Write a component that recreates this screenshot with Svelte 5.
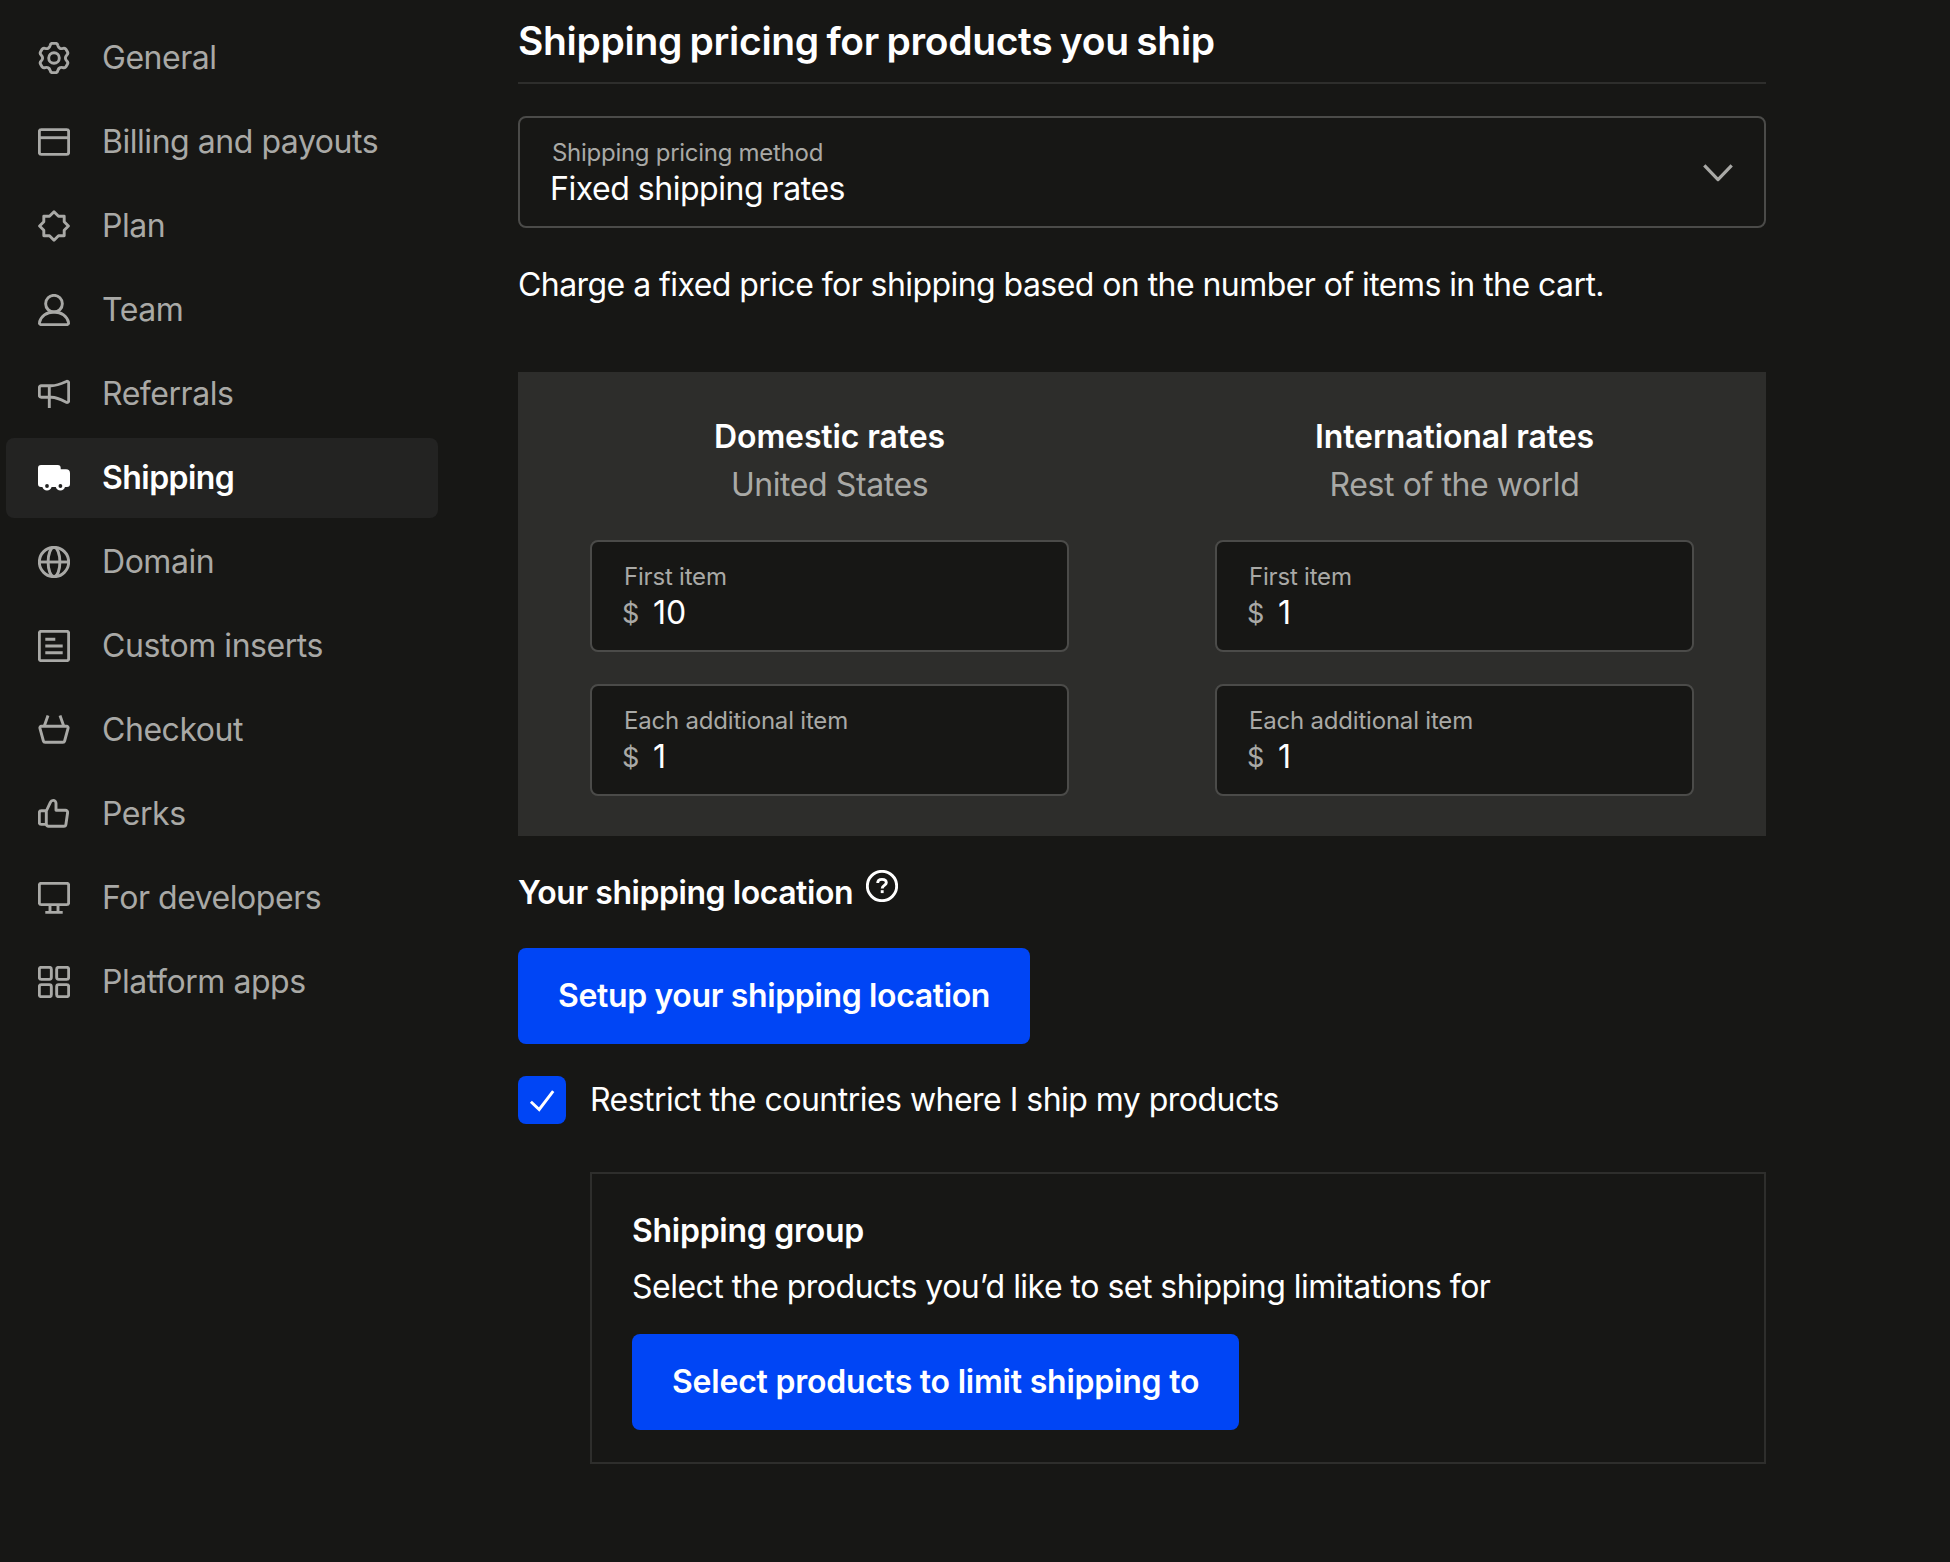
<script lang="ts">
  type NavItem = { id: string; label: string };

  const navItems: NavItem[] = [
    { id: "general", label: "General" },
    { id: "billing", label: "Billing and payouts" },
    { id: "plan", label: "Plan" },
    { id: "team", label: "Team" },
    { id: "referrals", label: "Referrals" },
    { id: "shipping", label: "Shipping" },
    { id: "domain", label: "Domain" },
    { id: "inserts", label: "Custom inserts" },
    { id: "checkout", label: "Checkout" },
    { id: "perks", label: "Perks" },
    { id: "developers", label: "For developers" },
    { id: "apps", label: "Platform apps" },
  ];

  let active = $state("shipping");
  let restrict = $state(true);

  let rates = $state([
    { title: "Domestic rates", region: "United States", first: "10", additional: "1" },
    { title: "International rates", region: "Rest of the world", first: "1", additional: "1" },
  ]);

  // One cog tooth, repeated every 60 degrees around the centre
  function gearPath(): string {
    const tooth = [
      [-4.4, -10.6], [-3.9, -12.4],
      [-3.4, -14.7], [-1.6, -14.7],
      [1.6, -14.7], [1.6, -14.7],
      [3.4, -14.7], [3.9, -12.4],
      [4.4, -10.6], [5.7, -9.87],
    ];
    let d = "M10.3 6.13";
    for (let k = 0; k < 6; k++) {
      const a = (k * Math.PI) / 3;
      const pts = tooth.map(([x, y]) => {
        const px = 16 + x * Math.cos(a) - y * Math.sin(a);
        const py = 16 + x * Math.sin(a) + y * Math.cos(a);
        return `${px.toFixed(2)} ${py.toFixed(2)}`;
      });
      for (let i = 0; i < pts.length; i += 2) d += `Q${pts[i]} ${pts[i + 1]}`;
    }
    return d + "Z";
  }
</script>

{#snippet icon(id: string)}
  <svg class="icon" viewBox="0 0 32 32" aria-hidden="true">
    {#if id === "general"}
      <path d={gearPath()} />
      <circle cx="16" cy="16" r="5.3" />
    {:else if id === "billing"}
      <rect x="1.33" y="3.67" width="29.33" height="24.67" rx="2" />
      <path d="M1.33 11.7h29.33" />
    {:else if id === "plan"}
      <path d="M16 1.8l4.5 4.4h5.7v5.6l4.2 4.2-4.2 4.2v5.6h-5.7L16 30.2l-4.5-4.4H5.8v-5.6L1.6 16l4.2-4.2V6.2h5.7z" />
    {:else if id === "team"}
      <circle cx="16" cy="9.7" r="8.35" />
      <path d="M16 18C8.5 18 2.8 22.4 1.5 28.4a1.7 1.7 0 0 0 1.7 2.2h25.6a1.7 1.7 0 0 0 1.7-2.2C29.2 22.4 23.5 18 16 18z" />
    {:else if id === "referrals"}
      <path d="M3.3 7.7h10C19 7.7 23.5 5.6 28.2 3.5a1.7 1.7 0 0 1 2.5 1.5v17.8a1.7 1.7 0 0 1-2.5 1.5C23.5 21.8 19 19.3 13.3 19.3h-10a2 2 0 0 1-2-2V9.7a2 2 0 0 1 2-2z" />
      <path d="M11.3 7.7V30" />
    {:else if id === "shipping"}
      <path
        class="solid"
        d="M3 3h16.7a3 3 0 0 1 3 3v1.3H28a4 4 0 0 1 4 4V22a3 3 0 0 1-3 3h-2a4.8 4.8 0 0 1-9.2 0h-4.2a4.8 4.8 0 0 1-9.2 0H3a3 3 0 0 1-3-3V6a3 3 0 0 1 3-3z"
      />
      <circle class="hole" cx="9" cy="24" r="1.9" />
      <circle class="hole" cx="22.4" cy="24" r="1.9" />
    {:else if id === "domain"}
      <circle cx="16" cy="16" r="14.67" />
      <ellipse cx="16" cy="16" rx="5.9" ry="14.67" />
      <path d="M1.33 16h29.33" />
    {:else if id === "inserts"}
      <rect x="1.33" y="1.33" width="29.33" height="29.33" rx="2" />
      <path d="M7.3 9.3h10M7.3 16h17.4M7.3 22.7h17.4" />
    {:else if id === "checkout"}
      <path d="M3.4 12.3h25.2a1.5 1.5 0 0 1 1.5 1.9l-3.5 12.8a1.8 1.8 0 0 1-1.7 1.3H7.1a1.8 1.8 0 0 1-1.7-1.3L1.9 14.2a1.5 1.5 0 0 1 1.5-1.9z" />
      <path d="M10 1.5L6.3 12M22 1.5L25.7 12" />
    {:else if id === "perks"}
      <path d="M8.3 12.7h-5a2 2 0 0 0-2 2v9.7a2 2 0 0 0 2 2h5" />
      <path d="M8.3 13l4.2-8.8a3 3 0 0 1 2.7-1.8A2.8 2.8 0 0 1 18 5.2v7.1h9.4a2.2 2.2 0 0 1 2.2 2.5l-1.7 11.7a2.1 2.1 0 0 1-2.1 1.8H10.5a2.2 2.2 0 0 1-2.2-2.2z" />
    {:else if id === "developers"}
      <rect x="1.33" y="1.33" width="29.33" height="21.33" rx="2" />
      <path d="M12 23v7M20 23v7M7.3 30.4h17.4" />
    {:else if id === "apps"}
      <rect x="1.33" y="1.33" width="12" height="12" rx="2" />
      <rect x="18.67" y="1.33" width="12" height="12" rx="2" />
      <rect x="1.33" y="18.67" width="12" height="12" rx="2" />
      <rect x="18.67" y="18.67" width="12" height="12" rx="2" />
    {/if}
  </svg>
{/snippet}

{#snippet money(label: string, value: string)}
  <div class="field">
    <span class="field-label">{label}</span>
    <div class="amount">
      <span class="currency">$</span>
      <span class="value">{value}</span>
    </div>
  </div>
{/snippet}

<div class="page">
  <nav class="sidebar">
    {#each navItems as item (item.id)}
      <button class="nav-item" class:active={active === item.id} onclick={() => (active = item.id)}>
        {@render icon(item.id)}
        <span>{item.label}</span>
      </button>
    {/each}
  </nav>

  <main class="content">
    <h1>Shipping pricing for products you ship</h1>

    <div class="field select">
      <div>
        <span class="field-label">Shipping pricing method</span>
        <span class="value">Fixed shipping rates</span>
      </div>
      <svg class="chevron" viewBox="0 0 32 20" aria-hidden="true">
        <path d="M2.3 2.3L16 16.6 29.7 2.3" />
      </svg>
    </div>

    <p class="description">Charge a fixed price for shipping based on the number of items in the cart.</p>

    <section class="rates">
      {#each rates as rate}
        <div class="rate">
          <header>
            <h2>{rate.title}</h2>
            <p class="region">{rate.region}</p>
          </header>
          {@render money("First item", rate.first)}
          {@render money("Each additional item", rate.additional)}
        </div>
      {/each}
    </section>

    <div class="location">
      <h2>Your shipping location</h2>
      <svg class="help" viewBox="0 0 32 32" aria-label="Help">
        <circle cx="16" cy="16" r="14.67" />
        <path d="M11.7 13.1C11.7 10.8 13.5 9.4 16 9.4s4.3 1.3 4.3 3.4c0 2.6-4.1 2.7-4.1 5.6" />
        <path d="M16.2 20.2v2.9" />
      </svg>
    </div>

    <button class="primary setup">Setup your shipping location</button>

    <label class="restrict">
      <input type="checkbox" bind:checked={restrict} />
      <span class="box" class:checked={restrict}>
        {#if restrict}
          <svg viewBox="0 0 48 48" aria-hidden="true">
            <path d="M12.9 25.8l8.3 7.7 14-18.3" />
          </svg>
        {/if}
      </span>
      <span>Restrict the countries where I ship my products</span>
    </label>

    {#if restrict}
      <section class="group">
        <h2>Shipping group</h2>
        <p>Select the products you’d like to set shipping limitations for</p>
        <button class="primary limit">Select products to limit shipping to</button>
      </section>
    {/if}
  </main>
</div>

<style>
  :global(body) {
    margin: 0;
    background: #171715;
  }

  .page {
    display: flex;
    box-sizing: border-box;
    min-height: 1562px;
    background: #171715;
    color: #fff;
    font-family: Inter, "Liberation Sans", sans-serif;
    font-size: 32px;
    line-height: 40px;
    letter-spacing: -0.52px;
  }

  .sidebar {
    display: flex;
    flex-direction: column;
    flex: none;
    gap: 4px;
    width: 432px;
    padding: 18px 80px 0 6px;
    letter-spacing: -0.46px;
  }

  .nav-item {
    display: flex;
    align-items: center;
    gap: 32px;
    height: 80px;
    padding: 0 32px;
    border: 0;
    border-radius: 8px;
    background: none;
    color: #a9a9a6;
    font: inherit;
    letter-spacing: inherit;
    text-align: left;
    cursor: pointer;
  }

  .nav-item.active {
    background: #232322;
    color: #fff;
    font-weight: 600;
    letter-spacing: -0.55px;
  }

  .icon {
    flex: none;
    width: 32px;
    height: 32px;
    fill: none;
    stroke: currentColor;
    stroke-width: 2.9;
    stroke-linejoin: round;
  }

  .solid {
    fill: currentColor;
    stroke: none;
  }

  .hole {
    fill: #232322;
    stroke: none;
  }

  .content {
    display: flex;
    flex-direction: column;
    width: 1248px;
    padding-top: 18px;
  }

  h1,
  h2,
  p {
    margin: 0;
  }

  h1 {
    padding-bottom: 18px;
    border-bottom: 2px solid #2e2e2c;
    font-size: 39px;
    font-weight: 600;
    line-height: 46px;
    letter-spacing: -0.32px;
    word-spacing: -2px;
  }

  h2 {
    font-size: 32px;
    font-weight: 600;
    line-height: 50px;
    letter-spacing: -0.27px;
  }

  .field {
    box-sizing: border-box;
    height: 112px;
    padding: 21px 32px 0;
    border: 2px solid #4b4b49;
    border-radius: 8px;
    background: #171715;
  }

  .field-label {
    display: block;
    color: #a9a9a6;
    font-size: 24px;
    line-height: 28px;
    letter-spacing: -0.2px;
  }

  .value {
    display: block;
    line-height: 44px;
  }

  .select {
    display: flex;
    justify-content: space-between;
    margin-top: 32px;
    padding-right: 30px;
  }

  .select .field-label {
    letter-spacing: -0.28px;
  }

  .select .value {
    margin-left: -2px;
    letter-spacing: -0.47px;
  }

  .chevron {
    width: 32px;
    height: 20px;
    margin-top: 24px;
    fill: none;
    stroke: #a9a9a6;
    stroke-width: 3.2;
    stroke-linejoin: round;
  }

  .description {
    margin: 37px 0 67px;
    letter-spacing: -0.56px;
  }

  .rates {
    display: grid;
    grid-template-columns: 1fr 1fr;
    column-gap: 2px;
    background: #2d2d2b;
  }

  .rate {
    display: flex;
    flex-direction: column;
    gap: 32px;
    padding: 40px 72px;
  }

  .rate header {
    text-align: center;
  }

  .rate h2 {
    letter-spacing: -0.12px;
  }

  .region {
    color: #a9a9a6;
    line-height: 46px;
    letter-spacing: -0.42px;
  }

  .amount {
    display: flex;
    margin-left: -2px;
    letter-spacing: 0;
  }

  .currency {
    width: 31px;
    color: #a9a9a6;
    font-size: 27px;
    line-height: 46px;
  }

  .location {
    display: flex;
    gap: 13px;
    margin-top: 32px;
  }

  .location h2 {
    letter-spacing: -0.45px;
  }

  .help {
    width: 32px;
    height: 32px;
    margin-top: 2px;
    fill: none;
    stroke: #fff;
    stroke-width: 2.9;
  }

  .primary {
    align-self: flex-start;
    height: 96px;
    padding: 0 40px;
    border: 0;
    border-radius: 8px;
    background: #0045f5;
    color: #fff;
    font: inherit;
    font-weight: 600;
    cursor: pointer;
  }

  .setup {
    margin-top: 30px;
    letter-spacing: -0.36px;
  }

  .restrict {
    display: flex;
    align-items: center;
    gap: 24px;
    margin-top: 32px;
    cursor: pointer;
  }

  .restrict input {
    display: none;
  }

  .box {
    box-sizing: border-box;
    width: 48px;
    height: 48px;
    border: 2px solid #4b4b49;
    border-radius: 8px;
  }

  .box.checked {
    border: 0;
    background: #0045f5;
  }

  .box svg {
    display: block;
    fill: none;
    stroke: #fff;
    stroke-width: 2.9;
  }

  .group {
    display: flex;
    flex-direction: column;
    margin: 48px 0 0 72px;
    padding: 32px 40px;
    border: 2px solid #2e2e2c;
  }

  .group p {
    margin-top: 7px;
    line-height: 48px;
    letter-spacing: -0.51px;
  }

  .limit {
    margin-top: 23px;
    letter-spacing: -0.22px;
  }
</style>
